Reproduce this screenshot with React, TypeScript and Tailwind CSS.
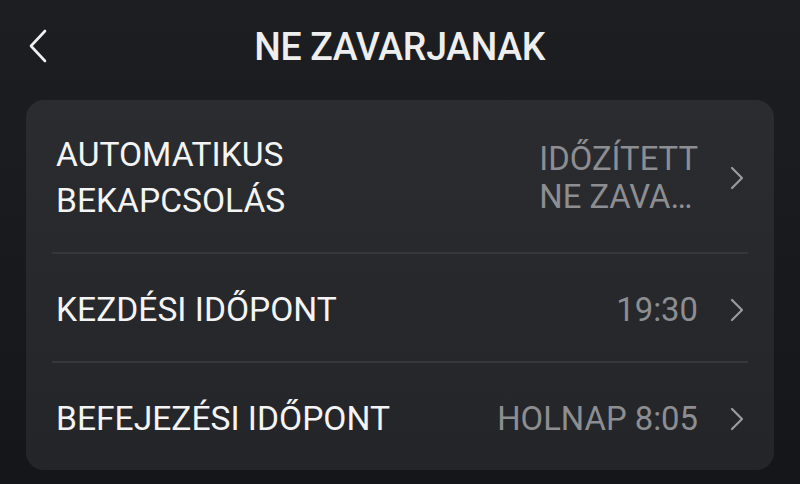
import React from 'react';

function Chevron() {
  return (
    <svg width="14" height="24" viewBox="0 0 14 24" fill="none" className="shrink-0">
      <polyline points="2,2 12,12 2,22" stroke="#9a9b9f" strokeWidth="2.2" strokeLinecap="round" strokeLinejoin="round" />
    </svg>
  );
}

function Row({ label, value, tall = false }: { label: React.ReactNode; value: React.ReactNode; tall?: boolean }) {
  return (
    <div className={`flex items-center justify-between pl-[30px] pr-[30px] pt-[4px] ${tall ? 'h-[152px]' : 'h-[107px]'}`}>
      <div className="text-[33.6px] leading-[46px] text-[#f4f4f5]">{label}</div>
      <div className="flex items-center gap-[32px]">
        <div className="text-[32.8px] leading-[38px] text-[#8d8e92]">{value}</div>
        <Chevron />
      </div>
    </div>
  );
}

export default function App() {
  return (
    <div
      className="w-[800px] h-[484px] overflow-hidden bg-gradient-to-b from-[#1c1e22] to-[#151619] flex flex-col"
      style={{ fontFamily: 'Roboto, "Noto Sans", sans-serif' }}
    >
      {/* Header */}
      <header className="relative h-[100px] flex items-center justify-center pb-[6px]">
        <button className="absolute left-[28px] top-[28px]">
          <svg width="20" height="36" viewBox="0 0 20 36" fill="none">
            <polyline points="17,3 3,18 17,33" stroke="#f0f0f0" strokeWidth="2.6" strokeLinecap="round" strokeLinejoin="round" />
          </svg>
        </button>
        <h1 className="text-[38px] font-medium text-[#eeeeee] scale-x-[0.985] tracking-[-0.3px]">NE ZAVARJANAK</h1>
      </header>

      {/* Card */}
      <div className="mx-[26px] rounded-[18px] bg-gradient-to-b from-[#2a2c30] to-[#242529]">
        <Row
          tall
          label={<>AUTOMATIKUS<br />BEKAPCSOLÁS</>}
          value={<div className="pl-[4px]">IDŐZÍTETT<br />NE ZAVA…</div>}
        />
        <div className="mx-[26px] h-[2px] bg-[#36373b]" />
        <Row label="KEZDÉSI IDŐPONT" value="19:30" />
        <div className="mx-[26px] h-[2px] bg-[#36373b]" />
        <Row label="BEFEJEZÉSI IDŐPONT" value="HOLNAP 8:05" />
      </div>
    </div>
  );
}
